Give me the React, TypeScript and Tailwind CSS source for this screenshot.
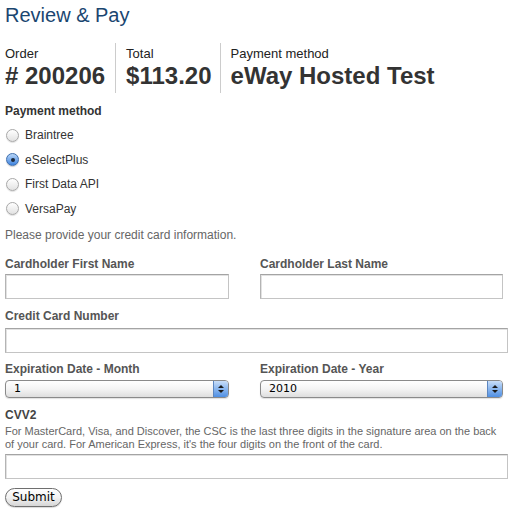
import React, { useState } from 'react';

const methods = ['Braintree', 'eSelectPlus', 'First Data API', 'VersaPay'];

const Radio: React.FC<{ checked: boolean }> = ({ checked }) =>
  checked ? (
    <span className="flex h-[13px] w-[13px] items-center justify-center rounded-full border border-[#3f6fae] bg-gradient-to-b from-[#b8d6f8] to-[#3d83de] shadow-[0_1px_1px_rgba(0,0,0,0.2)]">
      <span className="h-[4px] w-[4px] rounded-full bg-[#1b2a3d]" />
    </span>
  ) : (
    <span className="h-[13px] w-[13px] rounded-full border border-[#a8a8a8] bg-gradient-to-b from-[#ffffff] to-[#e2e2e2] shadow-[0_1px_1px_rgba(0,0,0,0.12)]" />
  );

const TextInput: React.FC = () => (
  <input
    type="text"
    className="block h-[25px] w-full border border-[#c4c4c4] border-t-[#a4a4a4] border-l-[#b4b4b4] bg-white shadow-[inset_1px_1px_0_#e2e2e2] outline-none"
  />
);

const Select: React.FC<{ value: string }> = ({ value }) => (
  <div className="flex h-[18px] w-full overflow-hidden rounded-[4px] border border-[#8a8a8a] bg-gradient-to-b from-[#ffffff] via-[#f4f4f4] to-[#dedede] shadow-[0_1px_1px_rgba(0,0,0,0.12)]">
    <span className="flex-1 pl-[8px] font-['DejaVu_Sans',sans-serif] text-[11px] leading-[16px] text-black">{value}</span>
    <span className="flex w-[15px] flex-col items-center justify-center gap-[2px] border-l border-[#5c86c0] bg-gradient-to-b from-[#c9def8] via-[#8ab6ee] to-[#4f8fe3]">
      <span className="h-0 w-0 border-x-[3px] border-b-[3px] border-x-transparent border-b-[#1a1a1a]" />
      <span className="h-0 w-0 border-x-[3px] border-t-[3px] border-x-transparent border-t-[#1a1a1a]" />
    </span>
  </div>
);

const Label: React.FC<{ children: React.ReactNode }> = ({ children }) => (
  <div className="text-[12px] font-bold leading-[16px] text-[#555]">{children}</div>
);

const App: React.FC = () => {
  const [method, setMethod] = useState('eSelectPlus');

  return (
    <div className="min-h-[518px] bg-white px-[5px] pt-[3px] font-['Liberation_Sans',Arial,sans-serif] text-[#333]">
      <h1 className="text-[20px] leading-[24px] text-[#1a4670]">Review &amp; Pay</h1>

      <div className="mt-[16px] flex">
        <div className="border-r border-[#ccc] py-[3px] pr-[10px]">
          <div className="text-[13px] leading-[16px] text-[#222]">Order</div>
          <div className="text-[24px] font-bold leading-[28px] text-[#333]"># 200206</div>
        </div>
        <div className="border-r border-[#ccc] py-[3px] pl-[10px] pr-[8px]">
          <div className="text-[13px] leading-[16px] text-[#222]">Total</div>
          <div className="text-[24px] font-bold leading-[28px] text-[#333]">$113.20</div>
        </div>
        <div className="py-[3px] pl-[10px]">
          <div className="text-[13px] leading-[16px] text-[#222]">Payment method</div>
          <div className="text-[24px] font-bold leading-[28px] text-[#333]">eWay Hosted Test</div>
        </div>
      </div>

      <div className="mt-[10px] text-[12px] font-bold leading-[16px] text-[#333]">Payment method</div>
      <div className="mt-[4px] flex flex-col">
        {methods.map((m) => (
          <label key={m} className="flex h-[24.5px] cursor-pointer items-center gap-[6px] pl-[1px] text-[12px] text-[#333]" onClick={() => setMethod(m)}>
            <Radio checked={method === m} />
            <span>{m}</span>
          </label>
        ))}
      </div>

      <p className="mt-[6px] text-[12px] leading-[16px] text-[#666]">Please provide your credit card information.</p>

      <div className="mt-[13px] grid grid-cols-[224px_243px] gap-x-[31px]">
        <div>
          <Label>Cardholder First Name</Label>
          <div className="mt-[2px]"><TextInput /></div>
        </div>
        <div>
          <Label>Cardholder Last Name</Label>
          <div className="mt-[2px]"><TextInput /></div>
        </div>
      </div>

      <div className="mt-[9px]">
        <Label>Credit Card Number</Label>
        <div className="mt-[4px]"><TextInput /></div>
      </div>

      <div className="mt-[8px] grid grid-cols-[224px_243px] gap-x-[31px]">
        <div>
          <Label>Expiration Date - Month</Label>
          <div className="mt-[3px]"><Select value="1" /></div>
        </div>
        <div>
          <Label>Expiration Date - Year</Label>
          <div className="mt-[3px]"><Select value="2010" /></div>
        </div>
      </div>

      <div className="mt-[9px]">
        <div className="text-[12px] font-bold leading-[16px] text-[#444]">CVV2</div>
        <p className="mt-[2px] text-[11px] leading-[13px] text-[#666]">
          For MasterCard, Visa, and Discover, the CSC is the last three digits in the signature area on the back of your card. For American Express, it's the four digits on the front of the card.
        </p>
        <div className="mt-[3px]"><TextInput /></div>
      </div>

      <button
        type="button"
        className="mt-[9px] block h-[19px] w-[57px] rounded-full border border-[#6f6f6f] bg-gradient-to-b from-[#ffffff] via-[#f2f2f2] to-[#d6d6d6] font-['DejaVu_Sans',sans-serif] text-[12px] leading-[17px] text-black shadow-[0_1px_1px_rgba(0,0,0,0.15)]"
      >
        Submit
      </button>
    </div>
  );
};

export default App;
